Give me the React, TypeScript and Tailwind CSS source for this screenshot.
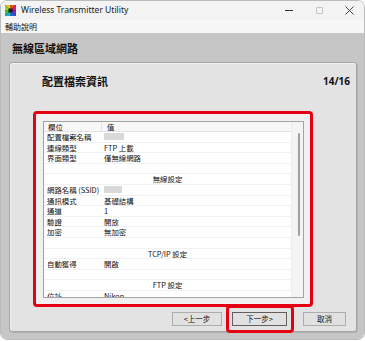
import React from "react";

type Row =
  | { kind: "kv"; k: string; v?: string; redact?: number }
  | { kind: "blank" }
  | { kind: "section"; t: string };

const rows: Row[] = [
  { kind: "kv", k: "配置檔案名稱", redact: 20 },
  { kind: "kv", k: "連線類型", v: "FTP 上載" },
  { kind: "kv", k: "界面類型", v: "僅無線網路" },
  { kind: "blank" },
  { kind: "section", t: "無線設定" },
  { kind: "kv", k: "網路名稱 (SSID)", redact: 18 },
  { kind: "kv", k: "通訊模式", v: "基礎結構" },
  { kind: "kv", k: "通道", v: "1" },
  { kind: "kv", k: "驗證", v: "開放" },
  { kind: "kv", k: "加密", v: "無加密" },
  { kind: "blank" },
  { kind: "section", t: "TCP/IP 設定" },
  { kind: "kv", k: "自動獲得", v: "開啟" },
  { kind: "blank" },
  { kind: "section", t: "FTP 設定" },
  { kind: "kv", k: "位址", v: "Nikon" },
];

function AppIcon() {
  return (
    <svg width="11" height="11" viewBox="0 0 11 11">
      <rect x="0" y="0" width="11" height="11" fill="#1b1b1b" />
      <polygon points="5.5,5.5 0,0 5.5,0" fill="#e8c21c" />
      <polygon points="5.5,5.5 5.5,0 11,0" fill="#e84a1c" />
      <polygon points="5.5,5.5 11,0 11,5.5" fill="#d81c7a" />
      <polygon points="5.5,5.5 11,5.5 11,11" fill="#7a2cc8" />
      <polygon points="5.5,5.5 11,11 5.5,11" fill="#2c5ad8" />
      <polygon points="5.5,5.5 5.5,11 0,11" fill="#1cb0d8" />
      <polygon points="5.5,5.5 0,11 0,5.5" fill="#2cc84a" />
      <polygon points="5.5,5.5 0,5.5 0,0" fill="#9ad81c" />
      <rect x="3.5" y="3.5" width="4" height="4" fill="#1b1b1b" />
    </svg>
  );
}

export default function App() {
  const cjk = "font-['Noto_Sans_CJK_TC','Noto_Sans',sans-serif]";
  return (
    <div className={`w-[365px] h-[341px] bg-white ${cjk}`}>
      <div className="w-[365px] h-[340px] flex flex-col rounded-[7px] border border-[#bcbcbc] overflow-hidden">
        {/* title bar */}
        <div className="h-[19px] shrink-0 bg-[#f3f3f3] flex items-center">
          <div className="ml-[4px] w-[11px] h-[11px]">
            <AppIcon />
          </div>
          <span className="ml-[5px] text-[8.5px] leading-none text-[#1a1a1a] font-['Noto_Sans',sans-serif]">
            Wireless Transmitter Utility
          </span>
          <div className="ml-auto flex h-full">
            <div className="w-[30px] h-full flex items-center justify-center">
              <div className="w-[8px] h-px bg-[#333]" />
            </div>
            <div className="w-[30px] h-full flex items-center justify-center">
              <div className="w-[7px] h-[7px] border border-[#c4c4c4] rounded-[1px]" />
            </div>
            <div className="w-[30px] h-full flex items-center justify-center">
              <svg width="9" height="9" viewBox="0 0 9 9">
                <path d="M0.5 0.5 L8.5 8.5 M8.5 0.5 L0.5 8.5" stroke="#333" strokeWidth="0.9" />
              </svg>
            </div>
          </div>
        </div>
        {/* menu bar */}
        <div className="h-[13px] shrink-0 bg-[#f7f7f7] flex items-center pl-[4px]">
          <span className="text-[8px] leading-none text-[#111]">輔助說明</span>
        </div>
        {/* main gray area */}
        <div className="flex-1 bg-[#c6c6c6] flex flex-col pl-[8px] pr-[7px] pb-[7px]">
          <div className="h-[29px] shrink-0 flex items-center pl-[3px] pt-[2px]">
            <span className="text-[11px] font-bold leading-none text-[#111]">無線區域網路</span>
          </div>
          <div className="flex-1 bg-[#e3e3e3] border border-[#a6a6a6] rounded-[3px] shadow-[inset_1px_1px_0_#f2f2f2,1px_1px_0_#b0b0b0] flex flex-col">
            <div className="flex items-center justify-between pt-[12px] pl-[32px] pr-[6px] h-[24px]">
              <span className="text-[11px] font-bold leading-[12px] text-[#111]">配置檔案資訊</span>
              <span className="text-[10px] font-bold leading-[12px] text-[#111] font-['Noto_Sans',sans-serif]">14/16</span>
            </div>
            {/* red box */}
            <div className="mt-[24px] ml-[23px] w-[280px] h-[196px] border-[3px] border-[#e50012] rounded-[4px] bg-[#f0f0f0] pl-[7px] pt-[7px]">
              <div className="w-[261px] h-[177px] border border-[#a3a3a3] bg-white flex overflow-hidden">
                <div className="flex-1 flex flex-col overflow-hidden">
                  <div className="h-[10px] shrink-0 flex bg-[#f7f7f7] border-b border-[#e2e2e2] text-[7.4px] leading-none text-[#111]">
                    <div className="w-[58px] pl-[4px] flex items-center border-r border-[#e2e2e2]">欄位</div>
                    <div className="pl-[5px] flex items-center">值</div>
                  </div>
                  {rows.map((r, i) => (
                    <div
                      key={i}
                      className="h-[10.6px] shrink-0 flex items-center border-b border-[#f1f1f1] text-[7.4px] leading-none text-[#111]"
                    >
                      {r.kind === "kv" && (
                        <>
                          <div className="w-[58px] pl-[3px] whitespace-nowrap">{r.k}</div>
                          <div className="pl-[2px] whitespace-nowrap">
                            {r.redact ? (
                              <div className="h-[7px] bg-[#d9d9d9]" style={{ width: r.redact }} />
                            ) : (
                              r.v
                            )}
                          </div>
                        </>
                      )}
                      {r.kind === "section" && (
                        <div className="w-full text-center whitespace-nowrap">{r.t}</div>
                      )}
                    </div>
                  ))}
                </div>
                <div className="w-[12px] shrink-0 bg-[#f4f4f4] border-l border-[#ececec] flex flex-col items-center pt-[11px]">
                  <div className="w-[2px] h-[103px] bg-[#9f9f9f] rounded-[1px] ml-[3px]" />
                </div>
              </div>
            </div>
            {/* buttons */}
            <div className="mt-[5px] flex items-center pl-[162px] text-[7.5px] leading-none text-[#111]">
              <div className="w-[50px] h-[14px] bg-[#e1e1e1] border border-[#adadad] flex items-center justify-center">
                &lt;上一步
              </div>
              <div className="relative ml-[10px]">
                <div className="w-[55px] h-[14px] bg-[#e1e1e1] border border-[#5f5f5f] flex items-center justify-center">
                  下一步&gt;
                </div>
                <div className="absolute -left-[6px] -right-[7px] -top-[7px] -bottom-[7px] border-[3px] border-[#e50012] rounded-[4px]" />
              </div>
              <div className="ml-[16px] w-[43px] h-[14px] bg-[#e1e1e1] border border-[#adadad] flex items-center justify-center">
                取消
              </div>
            </div>
          </div>
        </div>
      </div>
    </div>
  );
}
